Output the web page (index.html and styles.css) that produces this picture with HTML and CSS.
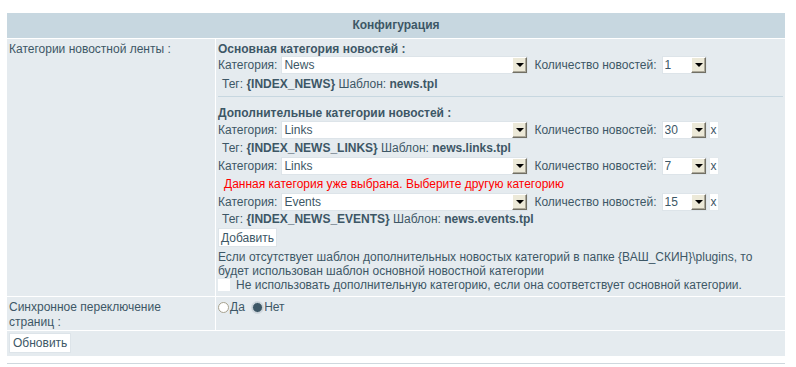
FILE: index.html
```html
<!DOCTYPE html>
<html lang="ru">
<head>
  <meta charset="UTF-8">
  <title>Конфигурация</title>
  <link rel="stylesheet" href="styles.css">
</head>
<body>
  <div class="page">
    <table class="config">
      <tr>
        <th colspan="2">Конфигурация</th>
      </tr>
      <tr>
        <td class="label">Категории новостной ленты :</td>
        <td class="value categories">
          <!-- main category -->
          <div class="title">Основная категория новостей :</div>
          <div class="selrow">
            <span>Категория:</span>
            <span class="sel wide"><select><option>News</option></select><span class="arrow"></span></span>
            <span class="count-label">Количество новостей:</span>
            <span class="sel small"><select><option>1</option></select><span class="arrow"></span></span>
          </div>
          <div class="tag first">Тег: <b>{INDEX_NEWS}</b> Шаблон: <b>news.tpl</b></div>
          <div class="divider"></div>

          <!-- extra categories -->
          <div class="title second">Дополнительные категории новостей :</div>
          <div class="selrow">
            <span>Категория:</span>
            <span class="sel wide"><select><option>Links</option></select><span class="arrow"></span></span>
            <span class="count-label">Количество новостей:</span>
            <span class="sel small"><select><option>30</option></select><span class="arrow"></span></span>
            <button class="remove">x</button>
          </div>
          <div class="tag">Тег: <b>{INDEX_NEWS_LINKS}</b> Шаблон: <b>news.links.tpl</b></div>
          <div class="selrow">
            <span>Категория:</span>
            <span class="sel wide"><select><option>Links</option></select><span class="arrow"></span></span>
            <span class="count-label">Количество новостей:</span>
            <span class="sel small"><select><option>7</option></select><span class="arrow"></span></span>
            <button class="remove">x</button>
          </div>
          <div class="error">Данная категория уже выбрана. Выберите другую категорию</div>
          <div class="selrow">
            <span>Категория:</span>
            <span class="sel wide"><select><option>Events</option></select><span class="arrow"></span></span>
            <span class="count-label">Количество новостей:</span>
            <span class="sel small"><select><option>15</option></select><span class="arrow"></span></span>
            <button class="remove">x</button>
          </div>
          <div class="tag last">Тег: <b>{INDEX_NEWS_EVENTS}</b> Шаблон: <b>news.events.tpl</b></div>
          <button class="btn">Добавить</button>
          <div class="note">Если отсутствует шаблон дополнительных новостых категорий в папке {ВАШ_СКИН}\plugins, то<br>будет использован шаблон основной новостной категории</div>
          <label class="check"><input type="checkbox"> Не использовать дополнительную категорию, если она соответствует основной категории.</label>
        </td>
      </tr>
      <tr>
        <td class="label">Синхронное переключение<br>страниц :</td>
        <td class="value radios">
          <label><input type="radio" name="sync">Да</label>
          <label><input type="radio" name="sync" checked>Нет</label>
        </td>
      </tr>
      <tr>
        <td colspan="2" class="submit"><button class="btn">Обновить</button></td>
      </tr>
    </table>
    <div class="bottom-line"></div>
  </div>
</body>
</html>
```

FILE: styles.css
```css
body {
  margin: 0;
  background: #fff;
  font-family: "Liberation Sans", Arial, sans-serif;
  font-size: 12px;
  color: #3d5766;
}
.page {
  padding: 12px 10px 0 6px;
}
.config {
  width: 780px;
  border-collapse: separate;
  border-spacing: 1px;
}
.config th {
  height: 25px;
  padding: 0;
  background-color: #c7d7e0;
  font-weight: bold;
  text-align: center;
  line-height: 25px;
}
.config td {
  background-color: #e5ebef;
  vertical-align: top;
  padding: 0;
}
.label {
  width: 206px;
  padding: 3px 0 0 2px !important;
  line-height: 15px;
}
.value {
  padding: 3px 2px 1px 2px !important;
}
.value.categories {
  padding-bottom: 4px !important;
}
.title {
  font-weight: bold;
  line-height: 14px;
}
.title.second {
  margin-top: 9px;
  margin-bottom: 1px;
}
.selrow {
  display: flex;
  align-items: center;
  height: 18px;
}
.sel {
  display: inline-flex;
  align-items: center;
  height: 18px;
  box-sizing: border-box;
  background: #fff;
  border: 1px solid #dde4e9;
  margin-left: 4px;
}
.sel select {
  appearance: none;
  -webkit-appearance: none;
  border: none;
  outline: none;
  background: transparent;
  font-family: inherit;
  font-size: 12px;
  color: #3d5766;
  padding: 0 0 0 2px;
  height: 16px;
  flex: 1;
}
.sel.wide {
  width: 247px;
}
.sel.small {
  width: 45px;
  margin-left: 5px;
}
.arrow {
  position: relative;
  width: 15px;
  height: 16px;
  box-sizing: border-box;
  background: #ece9d8;
  border-top: 1px solid #fff;
  border-left: 1px solid #fff;
  border-right: 1px solid #716f64;
  border-bottom: 1px solid #716f64;
  box-shadow: inset -1px -1px 0 #aca899;
}
.arrow::after {
  content: "";
  position: absolute;
  left: 3px;
  top: 5px;
  border-left: 4px solid transparent;
  border-right: 4px solid transparent;
  border-top: 4px solid #000;
}
.count-label {
  margin-left: 6px;
}
.remove {
  margin-left: 2px;
  height: 18px;
  width: 10px;
  padding: 0;
  background: #fff;
  border: 1px solid #e3e9ed;
  font-family: inherit;
  font-size: 12px;
  color: #3d5766;
}
.tag {
  line-height: 18px;
  padding-left: 4px;
}
.tag.first {
  line-height: 20px;
}
.tag.last {
  line-height: 17px;
}
.divider {
  margin-top: 2px;
  border-top: 1px solid #c7d7e0;
}
.error {
  color: #f00;
  line-height: 18px;
  padding-left: 6px;
}
.btn {
  height: 19px;
  padding: 0 2px;
  background: #fff;
  border: 1px solid #dde4e9;
  font-family: inherit;
  font-size: 12px;
  color: #3d5766;
}
.note {
  margin-top: 3px;
  line-height: 14px;
}
.check {
  display: flex;
  align-items: center;
  line-height: 14px;
  gap: 6px;
}
.check input {
  appearance: none;
  -webkit-appearance: none;
  margin: 0;
  width: 12px;
  height: 12px;
  background: #fff;
  border: none;
}
.radios {
  line-height: 15px;
  padding-top: 3px !important;
  padding-bottom: 3px !important;
}
.radios label {
  display: inline-flex;
  align-items: center;
  margin-right: 4px;
}
.radios input {
  appearance: none;
  -webkit-appearance: none;
  margin: 0 1px 0 0;
  width: 11px;
  height: 11px;
  border-radius: 50%;
  border: 1px solid #a7a28f;
  background: #fff;
}
.radios input:checked {
  border-color: #d0d8de;
  background: #3d5766;
  box-shadow: 0 0 0 1px #d0d8de;
}
.submit {
  padding: 2px 2px 3px 2px !important;
}
.submit .btn {
  height: 20px;
  padding: 0 3px;
}
.bottom-line {
  margin: 6px 0 0 1px;
  width: 778px;
  border-top: 1px solid #cfd8de;
}
```
